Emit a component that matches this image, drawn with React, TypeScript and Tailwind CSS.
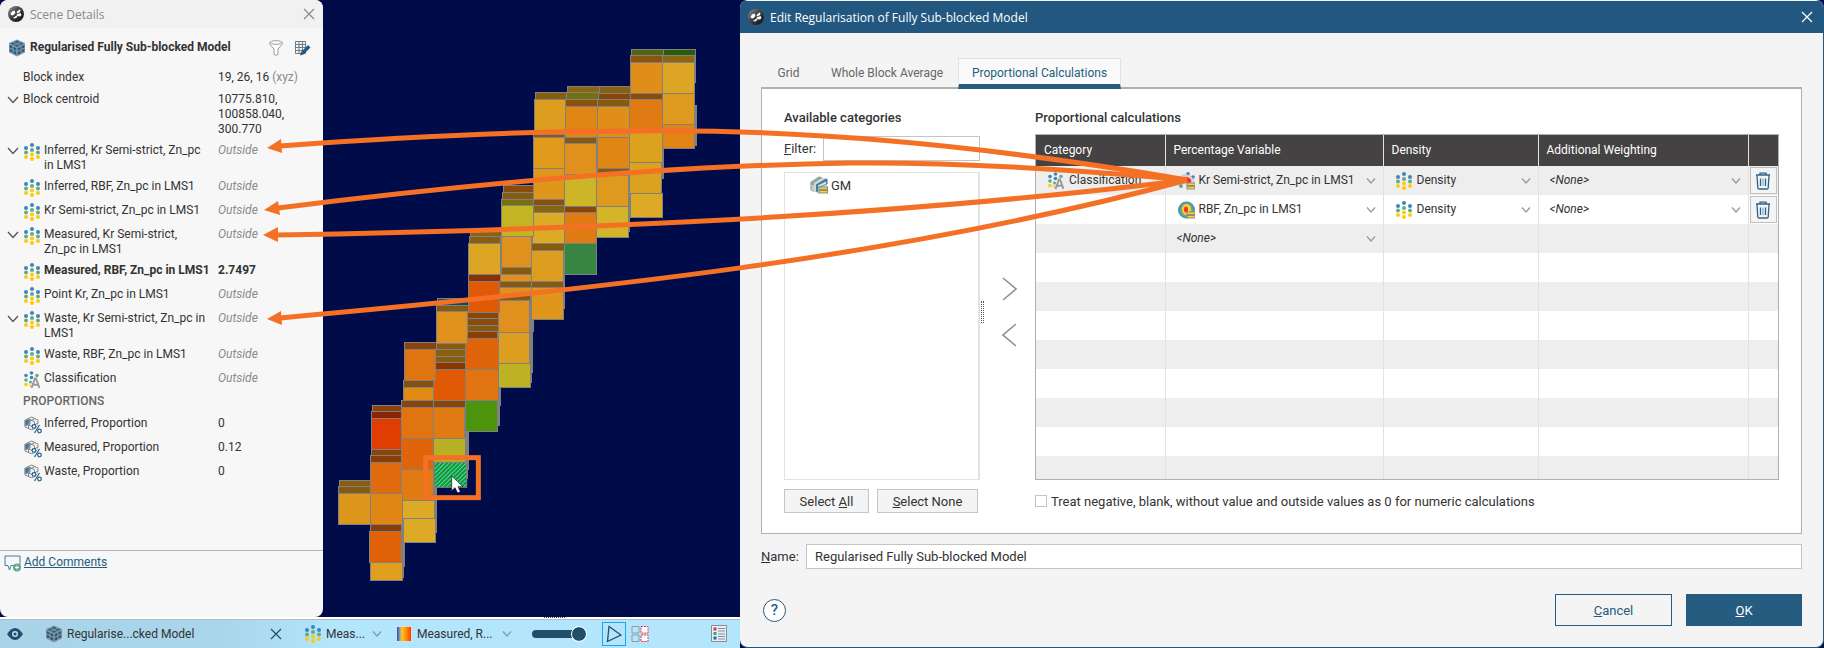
import React, { useState } from 'react';

type Block = [x: number, y: number, w: number, h: number, fill: string];

// Block model slice, in thirds of a pixel
const walls: Block[] = [
    [1092, 58, 5, 100, '#808080'],
    [1094, 226, 6, 122, '#808080'],
    [994, 200, 7, 246, '#808080'],
    [894, 430, 7, 176, '#808080'],
    [798, 335, 5, 100, '#808080'],
    [698, 650, 7, 186, '#808080'],
    [597, 810, 14, 96, '#808080'],
    [597, 906, 11, 122, '#808080'],
    [600, 1010, 6, 48, '#808080'],
    [510, 630, 6, 96, '#808080'],
    [502, 1073, 11, 56, '#808080'],
    [502, 1129, 7, 58, '#808080'],
    [403, 1130, 13, 190, '#808080'],
    [406, 1300, 8, 48, '#808080'],
    [308, 1372, 13, 138, '#808080'],
    [214, 1450, 11, 162, '#808080'],
    [214, 1600, 8, 44, '#808080'],
];

const blocks: Block[] = [
    [905, 58, 95, 19, '#56640f'],
    [1001, 59, 95, 18, '#2b5c08'],
    [902, 77, 96, 20, '#8c5413'],
    [998, 77, 96, 20, '#8a6615'],
    [902, 97, 96, 94, '#e08e1a'],
    [998, 97, 95, 94, '#dca624'],
    [899, 191, 97, 18, '#8a4c0c'],
    [998, 191, 95, 92, '#dd9a1e'],
    [899, 209, 97, 97, '#e07a12'],
    [998, 284, 96, 71, '#e08414'],
    [899, 306, 97, 91, '#dba220'],
    [899, 397, 96, 93, '#dba220'],
    [902, 491, 95, 71, '#dcaa24'],
    [712, 170, 95, 18, '#8a6614'],
    [808, 170, 92, 20, '#866212'],
    [709, 188, 95, 20, '#74700f'],
    [805, 190, 95, 19, '#8a4608'],
    [706, 209, 96, 20, '#8a520e'],
    [802, 209, 96, 20, '#865a10'],
    [706, 230, 96, 92, '#e08614'],
    [802, 230, 96, 92, '#e08e1a'],
    [704, 322, 96, 18, '#865a10'],
    [802, 322, 96, 93, '#e08614'],
    [704, 340, 96, 93, '#e0901c'],
    [802, 415, 96, 21, '#865a10'],
    [704, 433, 96, 95, '#ceb528'],
    [799, 436, 97, 93, '#dd9a1e'],
    [704, 529, 95, 18, '#8a4608'],
    [799, 529, 97, 93, '#d4b428'],
    [704, 547, 96, 93, '#e07a12'],
    [704, 640, 96, 93, '#378540'],
    [615, 188, 93, 21, '#865e10'],
    [613, 209, 93, 104, '#dd9e20'],
    [610, 313, 94, 9, '#865a10'],
    [610, 322, 94, 93, '#e09a1c'],
    [610, 415, 94, 93, '#e0961a'],
    [610, 509, 94, 18, '#8a5010'],
    [607, 527, 97, 20, '#866614'],
    [607, 547, 97, 93, '#dcaa24'],
    [605, 640, 97, 20, '#865a10'],
    [604, 661, 96, 93, '#dd9e20'],
    [604, 754, 96, 18, '#865a10'],
    [604, 772, 96, 96, '#e0961a'],
    [520, 467, 90, 20, '#8a4c0c'],
    [517, 487, 93, 21, '#865a10'],
    [514, 508, 96, 18, '#76700f'],
    [514, 526, 95, 93, '#c4b422'],
    [514, 619, 90, 94, '#e0901c'],
    [514, 713, 90, 21, '#865a10'],
    [511, 734, 93, 20, '#e0901c'],
    [508, 754, 96, 18, '#865a10'],
    [508, 772, 96, 24, '#e0901c'],
    [508, 796, 94, 16, '#865a10'],
    [505, 812, 93, 95, '#e0901c'],
    [505, 907, 93, 93, '#dd9e20'],
    [505, 1000, 97, 73, '#bcb224'],
    [420, 604, 94, 16, '#866412'],
    [418, 620, 94, 20, '#8a5e10'],
    [415, 640, 96, 93, '#dca624'],
    [415, 733, 96, 20, '#8a3004'],
    [415, 753, 93, 94, '#e05a06'],
    [412, 847, 93, 18, '#8a4608'],
    [412, 865, 93, 21, '#8a4c0c'],
    [409, 886, 95, 18, '#865a10'],
    [406, 904, 96, 21, '#8a3e06'],
    [406, 925, 98, 93, '#e0640a'],
    [406, 1018, 98, 93, '#e07410'],
    [406, 1111, 97, 94, '#4c940e'],
    [323, 805, 91, 20, '#16465e'],
    [320, 826, 95, 19, '#865a10'],
    [320, 845, 92, 95, '#e0901c'],
    [317, 940, 90, 18, '#865a10'],
    [316, 958, 90, 21, '#8a5e10'],
    [314, 979, 92, 18, '#8a5c10'],
    [311, 997, 95, 21, '#8a3604'],
    [311, 1018, 95, 93, '#e05a06'],
    [311, 1111, 95, 21, '#8a460a'],
    [311, 1132, 92, 93, '#e07a12'],
    [311, 1225, 95, 72, '#b8b024'],
    [223, 938, 95, 20, '#8a440a'],
    [223, 958, 92, 93, '#e07410'],
    [220, 1051, 91, 21, '#865010'],
    [220, 1072, 91, 39, '#e08a14'],
    [214, 1111, 97, 21, '#8a460a'],
    [214, 1132, 97, 93, '#e07410'],
    [214, 1225, 97, 93, '#e0640a'],
    [214, 1318, 97, 93, '#e07a12'],
    [217, 1411, 96, 55, '#dcaa24'],
    [220, 1466, 97, 71, '#dcaa24'],
    [128, 1125, 87, 19, '#8a440a'],
    [125, 1144, 90, 20, '#8a2402'],
    [125, 1165, 90, 94, '#e03e00'],
    [125, 1258, 90, 18, '#8a460a'],
    [122, 1276, 92, 21, '#8a3e06'],
    [122, 1297, 93, 93, '#e06a0c'],
    [122, 1390, 95, 93, '#e08614'],
    [120, 1483, 95, 20, '#8a3e06'],
    [119, 1503, 96, 94, '#e06208'],
    [122, 1597, 96, 55, '#e09e1e'],
    [29, 1351, 92, 18, '#865e10'],
    [26, 1369, 95, 21, '#865a10'],
    [26, 1390, 95, 93, '#dd961c'],
];

const Logo: React.FC = () => (
    <svg viewBox="0 0 16 16" className="size-4 shrink-0">
        <defs>
            <linearGradient id="logo" x1="0" y1="0" x2="1" y2="1">
                <stop offset="0" stopColor="#97979b" />
                <stop offset="0.4" stopColor="#4a4a4e" />
                <stop offset="0.8" stopColor="#1c1c1f" />
            </linearGradient>
        </defs>
        <circle cx="8" cy="8" r="8" fill="url(#logo)" />
        <path d="M2.500 7.500Q4 4.500 6.500 4.500L7.500 7 5 9.500 3 9zM8.500 6l3-2.500 1 .5-.5 2-2.500 1.500zM8.500 8.500l4-1.500 1 2-1.500 1.500-3-.5zM5 12l3.500-2.500 1 1.500L7 12.500z" fill="#fff" />
    </svg>
);

const CubeIcon: React.FC = () => (
    <svg viewBox="0 0 18 18" className="size-[18px] shrink-0">
        <path d="M9 .5 17 4v9.500L9 17.500 1 13.500V4z" fill="#8d979f" />
        <path d="M9 1.500 12 3 9 4.300 6 3zM5 3.400 8 4.700 5 6 2.300 4.600zM13 3.400l2.700 1.200L13 6l-3-1.300zM9 5.200l3 1.300L9 8 6 6.500z" fill="#2b648c" />
        <path d="M1.700 6 4.500 7.300v2.500L1.700 8.500zM5.500 7.800l2.800 1.400v2.500l-2.800-1.300zM1.700 9.800l2.800 1.300v2.500l-2.800-1.300zM5.500 11.600l2.800 1.300v2.800l-2.800-1.300zM16.300 6v2.500l-2.800 1.300V7.300zM12.500 7.800v2.600l-2.800 1.300V9.200zM16.300 9.800v2.500l-2.800 1.300v-2.500zM12.500 11.600v2.800l-2.800 1.300v-2.800z" fill="#255c82" />
    </svg>
);

const DotsIcon: React.FC = () => (
    <svg viewBox="0 0 16 18" className="h-[18px] w-4 shrink-0">
        <g fill="#3d86b8">
            <circle cx="2" cy="5" r="2" />
            <circle cx="8" cy="2" r="2" />
            <circle cx="14" cy="5" r="2" />
        </g>
        <g fill="#5fab8c">
            <circle cx="2" cy="9.500" r="2" />
            <circle cx="8" cy="7" r="2" />
            <circle cx="14" cy="9.500" r="2" />
        </g>
        <g fill="#ffcb05">
            <circle cx="2" cy="14" r="2" />
            <circle cx="8" cy="11.500" r="2" />
            <circle cx="8" cy="16" r="2" />
            <circle cx="14" cy="14" r="2" />
        </g>
    </svg>
);

const CategoryIcon: React.FC = () => (
    <svg viewBox="0 0 16 18" className="h-[18px] w-4 shrink-0">
        <g fill="#3d86b8">
            <circle cx="2" cy="4.500" r="1.800" />
            <circle cx="7.500" cy="2" r="1.800" />
            <circle cx="7.500" cy="6.500" r="1.800" />
        </g>
        <g fill="#5fab8c">
            <circle cx="2" cy="9" r="1.800" />
            <circle cx="13" cy="4.500" r="1.800" />
            <circle cx="6.500" cy="11" r="1.500" />
        </g>
        <circle cx="2" cy="13.500" r="1.800" fill="#ffcb05" />
        <circle cx="6" cy="14.500" r="1" fill="#ffcb05" />
        <path d="m7.500 17 3.500-9.500h1L15.500 17M8.800 13.800h5.400" fill="none" stroke="#9a9a9a" strokeWidth="2" />
    </svg>
);

const ProportionIcon: React.FC = () => (
    <svg viewBox="0 0 18 18" className="size-[18px] shrink-0">
        <path d="M7.500 1 14 4v6l-6 4-7-3V4z" fill="#eee" stroke="#8a8a8a" />
        <path d="M1 4.500 6 3v5l-5 2zM1 10l5-2" fill="#3a7299" stroke="#7f9db3" />
        <path d="m4 2.700 6.500 3V13M11 2.500 4.500 5.700V12M14 7l-6 3.300L4 9" fill="none" stroke="#8a8a8a" />
        <path d="m16 8-5 9" stroke="#f7f7f7" strokeWidth="3" />
        <circle cx="10" cy="10.500" r="1.800" fill="#fff" stroke="#2b648c" strokeWidth="1.300" />
        <circle cx="15.500" cy="15" r="1.800" fill="#fff" stroke="#2b648c" strokeWidth="1.300" />
        <path d="m15.500 9-5 8" stroke="#2b648c" strokeWidth="1.200" />
    </svg>
);

const RbfIcon: React.FC = () => (
    <svg viewBox="0 0 18 18" className="size-[18px] shrink-0">
        <circle cx="8.500" cy="9" r="8.500" fill="#4a93b8" />
        <ellipse cx="8.500" cy="9" rx="6.500" ry="7" fill="#62ae83" />
        <ellipse cx="8.500" cy="8.500" rx="4.500" ry="5.500" fill="#ffd21f" />
        <ellipse cx="8" cy="8.500" rx="2" ry="3" fill="#e8343c" />
        <path d="M8.500 10.500h8.500v7H8.500z" fill="#8d8d8d" />
        <path d="M9.500 11.500h7V13h-7zM9.500 15h7v1.500h-7z" fill="#ffd21f" />
    </svg>
);

const KrigingIcon: React.FC = () => (
    <svg viewBox="0 0 18 18" className="size-[18px] shrink-0">
        <circle cx="10" cy="1.800" r="1.800" fill="#3d86b8" />
        <circle cx="15" cy="5" r="1.800" fill="#3d86b8" />
        <circle cx="3" cy="14" r="2" fill="#5fab8c" />
        <ellipse cx="9.500" cy="8" rx="7" ry="4.500" fill="#f7c6c4" stroke="#c9c9c9" transform="rotate(30 9.500 8)" />
        <ellipse cx="9.500" cy="8" rx="4" ry="2.500" fill="#e8343c" transform="rotate(30 9.500 8)" />
        <path d="M8.500 10.500h8.500v7H8.500z" fill="#8d8d8d" />
        <path d="M9.500 11.500h7V13h-7zM9.500 15h7v1.500h-7z" fill="#ffd21f" />
    </svg>
);

const GmIcon: React.FC = () => (
    <svg viewBox="0 0 18 18" className="size-[18px] shrink-0">
        <path d="M.5 6 9 .5l8 2.500v13l-9 1.500L.5 14z" fill="#d3d7d7" />
        <path d="M.5 6 9 .5l3.500 1L4 7v9L.5 14z" fill="#86a99c" />
        <path d="M1.500 8.500 4 9.500V15l-2.500-1z" fill="#c9cdcd" />
        <path d="m6 8.500 10-6 1.500.5v5L8 12v4l-2-.5z" fill="#3f7da3" />
        <path d="m8 9.500 8-4v2.500L8 11z" fill="#e4e8e8" />
        <path d="M8.500 10.500H18v7H8.500z" fill="#8d8d8d" />
        <path d="M9.500 11.500h7.500V13H9.500zM9.500 15h7.500v1.500H9.500z" fill="#ffd21f" />
    </svg>
);

const Chevron: React.FC<{ className?: string }> = ({ className = '' }) => (
    <svg viewBox="0 0 12 8" className={`h-2 w-3 shrink-0 ${className}`} fill="none" stroke="currentColor" strokeWidth="1.300">
        <path d="m1 1 5 5.500L11 1" />
    </svg>
);

const SmallChevron: React.FC<{ className?: string }> = ({ className = '' }) => (
    <svg viewBox="0 0 10 6" className={`h-1.5 w-2.5 shrink-0 ${className}`} fill="none" stroke="currentColor" strokeWidth="1.300">
        <path d="m1 .5 4 4.500L9 .5" />
    </svg>
);

const Cross: React.FC<{ className?: string }> = ({ className = '' }) => (
    <svg viewBox="0 0 12 12" className={className} fill="none" stroke="currentColor" strokeWidth="1.200">
        <path d="m1 1 10 10M11 1 1 11" />
    </svg>
);

const TrashIcon: React.FC = () => (
    <svg viewBox="0 0 16 18" className="h-[18px] w-4" fill="none" stroke="#2b648c" strokeWidth="1.300">
        <path d="M1 3h14M5 2.500V1.200h6v1.300M2 3.500l.8 12.500q.1 1 1.200 1h8q1.100 0 1.200-1L14 3.500M5.500 6.500V14M10.500 6.500V14" />
        <path d="M8 6.500V14" stroke="#8fb0c6" />
    </svg>
);

const Scene: React.FC = () => (
    <svg viewBox="-21 -90 1251 1851" preserveAspectRatio="xMinYMin meet" className="h-[617px] w-[417px]">
        <defs>
            <pattern id="hatch" width="9" height="9" patternUnits="userSpaceOnUse" patternTransform="rotate(45)">
                <rect width="9" height="9" fill="#2f8a1c" />
                <rect width="3" height="9" fill="#14f0d8" />
            </pattern>
        </defs>
        <g shapeRendering="crispEdges">
            {walls.map(([x, y, w, h, fill], index) => (
                <rect key={index} x={x} y={y} width={w} height={h} fill={fill} />
            ))}
            {blocks.map(([x, y, w, h, fill], index) => (
                <rect key={index} x={x} y={y} width={w} height={h} fill={fill} stroke="#808080" strokeWidth="3" />
            ))}
        </g>
        <rect x="313" y="1297" width="97" height="75" fill="url(#hatch)" stroke="#808080" strokeWidth="3" />
        <rect x="287" y="1283" width="158" height="120" fill="none" stroke="#f47025" strokeWidth="15" />
        <path d="M365 1338v44l10-9 8 16 8-4-7-15h15z" fill="#fff" stroke="#111" strokeWidth="2" />
    </svg>
);

interface DetailRow {
    name: string;
    value: string;
    icon: 'dots' | 'category' | 'proportion';
    open?: boolean;
    bold?: boolean;
}

const variables: DetailRow[] = [
    { name: 'Inferred, Kr Semi-strict, Zn_pc in LMS1', value: 'Outside', icon: 'dots', open: true },
    { name: 'Inferred, RBF, Zn_pc in LMS1', value: 'Outside', icon: 'dots' },
    { name: 'Kr Semi-strict, Zn_pc in LMS1', value: 'Outside', icon: 'dots' },
    { name: 'Measured, Kr Semi-strict, Zn_pc in LMS1', value: 'Outside', icon: 'dots', open: true },
    { name: 'Measured, RBF, Zn_pc in LMS1', value: '2.7497', icon: 'dots', bold: true },
    { name: 'Point Kr, Zn_pc in LMS1', value: 'Outside', icon: 'dots' },
    { name: 'Waste, Kr Semi-strict, Zn_pc in LMS1', value: 'Outside', icon: 'dots', open: true },
    { name: 'Waste, RBF, Zn_pc in LMS1', value: 'Outside', icon: 'dots' },
    { name: 'Classification', value: 'Outside', icon: 'category' },
];

const proportions: DetailRow[] = [
    { name: 'Inferred, Proportion', value: '0', icon: 'proportion' },
    { name: 'Measured, Proportion', value: '0.12', icon: 'proportion' },
    { name: 'Waste, Proportion', value: '0', icon: 'proportion' },
];

const DetailItem: React.FC<{ row: DetailRow }> = ({ row }) => (
    <div className={`flex min-h-6 py-[3px] ${row.bold ? 'font-bold' : ''}`}>
        <div className="w-6 shrink-0 pt-1 pl-[7px]">{row.open && <Chevron className="text-[#555]" />}</div>
        <div className="-mb-1 w-5 shrink-0">
            {row.icon === 'dots' && <DotsIcon />}
            {row.icon === 'category' && <CategoryIcon />}
            {row.icon === 'proportion' && <ProportionIcon />}
        </div>
        <div className="w-[174px] shrink-0">
            <div className={row.bold ? 'whitespace-nowrap' : 'w-[163px]'}>{row.name}</div>
        </div>
        <div className={row.value === 'Outside' ? 'text-[#8a8a8a] italic' : ''}>{row.value}</div>
    </div>
);

const SceneDetails: React.FC = () => (
    <aside className="flex w-[323px] shrink-0 flex-col overflow-hidden rounded-lg bg-[#f7f7f7] text-[12px] leading-[15px] text-[#333]">
        <header className="flex h-7 items-center gap-1.5 bg-[#f1f1f1] px-2 font-['Open_Sans',sans-serif] text-[12px] text-[#8a8a8a]">
            <Logo />
            <span className="flex-1">Scene Details</span>
            <button aria-label="Close">
                <Cross className="size-3" />
            </button>
        </header>
        <div className="flex h-[39px] items-center gap-1 pr-3 pl-2">
            <CubeIcon />
            <h2 className="flex-1 font-bold whitespace-nowrap">Regularised Fully Sub-blocked Model</h2>
            <button aria-label="Filter">
                <svg viewBox="0 0 14 16" className="mr-2 h-4 w-3.5" fill="#fff" stroke="#999">
                    <path d="M1 2.500v2L5 9v5.500q2 1.500 4 0V9l4-4.500v-2z" />
                    <ellipse cx="7" cy="2.500" rx="6" ry="1.800" />
                </svg>
            </button>
            <button aria-label="Edit table">
                <svg viewBox="0 0 16 16" className="size-4" fill="none">
                    <path d="M.5 1.500h10v12H.5zM.5 4.500h10M.5 7.500h10M.5 10.500h10M4 1.500v12M7.500 1.500v12" stroke="#6b7a85" />
                    <path d="m6 12 7-7 2.500 2.500-7 7L5 15.500z" fill="#225a85" />
                </svg>
            </button>
        </div>
        <div className="flex min-h-[22px] pt-[3px] pl-[23px]">
            <div className="w-[195px] shrink-0">Block index</div>
            <div>
                19, 26, 16 <span className="text-[#8a8a8a]">(xyz)</span>
            </div>
        </div>
        <div className="flex py-[3px]">
            <div className="w-[23px] shrink-0 pt-1 pl-[7px]">
                <Chevron className="text-[#555]" />
            </div>
            <div className="w-[195px] shrink-0">Block centroid</div>
            <div className="w-[70px]">10775.810, 100858.040, 300.770</div>
        </div>
        {variables.map((row) => (
            <DetailItem key={row.name} row={row} />
        ))}
        <h3 className="h-[21px] pt-0.5 pl-[23px] font-medium text-[#666]">PROPORTIONS</h3>
        {proportions.map((row) => (
            <DetailItem key={row.name} row={row} />
        ))}
        <footer className="mt-auto flex h-[67px] items-start gap-[3px] border-t border-[#b5b5b5] px-1 pt-1">
            <svg viewBox="0 0 17 17" className="size-[17px]" fill="none">
                <path d="M1 1h15v9.500H7L5.500 15 4 10.500H1z" stroke="#3f7da3" />
                <circle cx="13" cy="12.500" r="4" fill="#5fab8c" />
                <path d="M13 10.500v4M11 12.500h4" stroke="#fff" />
            </svg>
            <a href="#comments" className="text-[#265c80] underline">
                Add Comments
            </a>
        </footer>
    </aside>
);

const Toolbar: React.FC = () => (
    <div className="relative flex h-[31px] items-center border-t-2 border-white bg-[#b3e5fc] bg-linear-to-r from-[#a9d4e8] via-[#a9d6eb] via-30% to-[#b3e5fc] to-45% text-[12px] text-[#333] shadow-[inset_0_1px_0_#b5bcc0]">
        <span className="absolute -top-0.5 left-[544px] h-0.5 w-[21px] border-t border-dotted border-[#444]" />
        <button aria-label="Toggle visibility" className="ml-[7px]">
            <svg viewBox="0 0 16 12" className="h-3 w-4">
                <path d="M0 6q8-12 16 0-8 12-16 0z" fill="#234e6b" />
                <circle cx="8" cy="6" r="3" fill="#b3e5fc" />
                <circle cx="8" cy="6" r="1.600" fill="#234e6b" />
            </svg>
        </button>
        <div className="ml-[22px] flex w-[221px] items-center gap-1">
            <CubeIcon />
            Regularise...cked Model
        </div>
        <button aria-label="Remove" className="mr-[23px] ml-1 text-[#234e6b]">
            <Cross className="size-3" />
        </button>
        <button className="flex w-[77px] items-center gap-[5px]">
            <DotsIcon />
            <span className="flex-1 text-left whitespace-nowrap">Meas...</span>
            <SmallChevron className="text-[#8a9aa5]" />
        </button>
        <button className="ml-[14px] flex w-[116px] items-center gap-[5px]">
            <span className="size-4 border border-[#ddd] bg-linear-to-r from-[#1b3fd0] via-[#ffc61a] via-35% to-[#f23a00]" />
            <span className="flex-1 text-left whitespace-nowrap">Measured, R...</span>
            <SmallChevron className="text-[#8a9aa5]" />
        </button>
        <input
            type="range"
            aria-label="Opacity"
            defaultValue={100}
            className="ml-5 h-2 w-[54px] appearance-none rounded-full bg-[#234e6b] [&::-webkit-slider-thumb]:size-3.5 [&::-webkit-slider-thumb]:appearance-none [&::-webkit-slider-thumb]:rounded-full [&::-webkit-slider-thumb]:bg-[#234e6b] [&::-webkit-slider-thumb]:outline [&::-webkit-slider-thumb]:outline-white"
        />
        <button aria-label="Slice" className="ml-4 flex size-6 items-center justify-center border border-[#1aa7ee]">
            <svg viewBox="0 0 16 18" className="h-[18px] w-4" fill="none" stroke="#234e6b" strokeWidth="1.300">
                <path d="M3 1.500 15 10 1.500 16.500z" />
            </svg>
        </button>
        <button aria-label="Cells" className="ml-[5px]">
            <svg viewBox="0 0 18 18" className="size-[18px]" fill="none" stroke="#999">
                <path d="M1 1.500h7v6.500H1zM1 10h7v6.500H1z" />
                <path d="M10 1.500h7v6.500h-7zM10 10h7v6.500h-7z" fill="#fff" stroke="#e8343c" strokeDasharray="2 1" />
            </svg>
        </button>
        <button aria-label="Legend" className="mr-[13px] ml-auto">
            <svg viewBox="0 0 16 17" className="h-[17px] w-4">
                <path d="M.5.500h15v16H.5z" fill="#dff0f8" stroke="#8d8d8d" />
                <path d="M7 3.500h7M7 6h7M7 9h7M7 11.500h7M7 14h7" stroke="#8d8d8d" />
                <path d="M2.500 2.500h3v3h-3z" fill="#e8343c" />
                <path d="M2.500 7h3v3h-3z" fill="#3f9f78" />
                <path d="M2.500 11.500h3v3h-3z" fill="#2b648c" />
            </svg>
        </button>
    </div>
);

const CellSelect: React.FC<{ label: string; value: string; icon?: React.ReactNode }> = ({ label, value, icon }) => (
    <div className="relative flex h-full items-center">
        <span className={`pointer-events-none ${icon ? 'w-[33px] pl-3' : 'w-[11px]'}`}>{icon}</span>
        <select aria-label={label} className={`h-full min-w-0 flex-1 appearance-none bg-transparent ${icon ? '' : 'italic'}`}>
            <option>{value}</option>
        </select>
        <SmallChevron className="pointer-events-none absolute right-[7px] text-[#999]" />
    </div>
);

const rows = [
    { category: 'Classification', variable: 'Kr Semi-strict, Zn_pc in LMS1', icon: <KrigingIcon />, density: 'Density', weighting: '<None>' },
    { category: '', variable: 'RBF, Zn_pc in LMS1', icon: <RbfIcon />, density: 'Density', weighting: '<None>' },
    { category: '', variable: '<None>' },
    ...Array.from({ length: 8 }, () => ({ category: '', variable: '' })),
] as { category: string; variable: string; icon?: React.ReactNode; density?: string; weighting?: string }[];

const ProportionalTable: React.FC = () => (
    <table className="w-full table-fixed border-collapse text-[12px]">
        <colgroup>
            <col className="w-[129px]" />
            <col className="w-[218px]" />
            <col className="w-[155px]" />
            <col />
            <col className="w-[30px]" />
        </colgroup>
        <thead>
            <tr className="h-[31px] bg-[#444243] text-left text-white">
                <th className="border-r border-[#e2e2e2] pl-2 font-normal">Category</th>
                <th className="border-r border-[#e2e2e2] pl-2 font-normal">Percentage Variable</th>
                <th className="border-r border-[#e2e2e2] pl-2 font-normal">Density</th>
                <th className="border-r border-[#e2e2e2] pl-2 font-normal">Additional Weighting</th>
                <th aria-label="Actions" />
            </tr>
        </thead>
        <tbody>
            {rows.map((row, index) => (
                <tr key={index} className="h-[29px] odd:bg-[#eeeeee]">
                    <td className="border-r border-[#e2e2e2] p-0">
                        {row.category && (
                            <div className="flex items-center gap-[5px] pl-3">
                                <CategoryIcon />
                                {row.category}
                            </div>
                        )}
                    </td>
                    <td className="h-[29px] border-r border-[#e2e2e2] p-0">
                        {row.variable && <CellSelect label="Percentage variable" value={row.variable} icon={row.icon} />}
                    </td>
                    <td className="h-[29px] border-r border-[#e2e2e2] p-0">
                        {row.density && <CellSelect label="Density" value={row.density} icon={<DotsIcon />} />}
                    </td>
                    <td className="h-[29px] border-r border-[#e2e2e2] p-0">
                        {row.weighting && <CellSelect label="Additional weighting" value={row.weighting} />}
                    </td>
                    <td className="p-0">
                        {row.density && (
                            <button aria-label="Delete row" className="mx-auto flex h-[27px] w-[27px] items-center justify-center border border-[#bfbfbf] bg-[#f4f4f4]">
                                <TrashIcon />
                            </button>
                        )}
                    </td>
                </tr>
            ))}
        </tbody>
    </table>
);

const tabs = [
    { title: 'Grid', width: 'w-[55px]' },
    { title: 'Whole Block Average', width: 'w-[142px]' },
    { title: 'Proportional Calculations', width: 'w-[163px]' },
];

const EditDialog: React.FC = () => {
    const [activeTab, setActiveTab] = useState<string>('Proportional Calculations');
    const [name, setName] = useState<string>('Regularised Fully Sub-blocked Model');

    return (
        <section className="flex min-w-0 flex-1 flex-col overflow-hidden rounded-lg border-r border-b border-[#22587f] bg-[#f4f4f4] text-[13px] leading-[15px] text-[#333]">
            <header className="mt-px flex h-8 shrink-0 items-center gap-1.5 bg-[#22587f] px-2 font-['Open_Sans',sans-serif] text-[12px] text-white">
                <Logo />
                <span className="flex-1">Edit Regularisation of Fully Sub-blocked Model</span>
                <button aria-label="Close">
                    <Cross className="mr-0.5 size-3" />
                </button>
            </header>

            <div className="flex min-h-0 flex-1 flex-col pr-[21px] pl-[21px]">
                <div className="relative z-10 -mb-0.5 flex pt-[25px] text-[12px]">
                    {tabs.map((tab) => (
                        <button
                            key={tab.title}
                            onClick={() => setActiveTab(tab.title)}
                            className={`h-[31px] whitespace-nowrap ${tab.width} ${
                                activeTab === tab.title
                                    ? 'border border-b-[5px] border-[#e2e2e2] border-b-[#265c80] bg-[#fafafa] pt-1 text-[#265c80]'
                                    : 'text-[#666]'
                            }`}
                        >
                            {tab.title}
                        </button>
                    ))}
                </div>

                <div className="flex min-h-0 flex-1 border border-t-2 border-[#b0b0b0] bg-white pr-[22px] pb-5 pl-[22px]">
                    <div className="flex w-[196px] shrink-0 flex-col">
                        <h3 className="pt-[21px] font-medium">Available categories</h3>
                        <div className="mt-[11px] flex h-[25px] items-center">
                            <label htmlFor="filter" className="w-[39px]">
                                <u>F</u>ilter:
                            </label>
                            <input id="filter" type="text" className="h-[25px] min-w-0 flex-1 border border-[#c4c4c4] bg-white px-2" />
                        </div>
                        <ul className="mt-[11px] flex-1 border border-r-2 border-[#e2e2e2] py-[3px] pl-[25px]">
                            <li className="flex items-center gap-[3px]">
                                <GmIcon />
                                GM
                            </li>
                        </ul>
                        <div className="mt-[9px] flex gap-2">
                            <button className="h-6 w-[85px] border border-[#c4c4c4] bg-[#f4f4f4]">
                                Select <u>A</u>ll
                            </button>
                            <button className="h-6 w-[101px] border border-[#c4c4c4] bg-[#f4f4f4]">
                                <u>S</u>elect None
                            </button>
                        </div>
                    </div>

                    <div className="flex w-[55px] shrink-0 items-center pt-[21px] pl-px">
                        <div className="h-[22px] w-[3px] border-x border-dotted border-[#555]" />
                        <div className="ml-[18px] flex flex-col gap-[22px] text-[#8d8d8d]">
                            <button aria-label="Add">
                                <svg viewBox="0 0 15 24" className="h-6 w-[15px]" fill="none" stroke="currentColor" strokeWidth="1.500">
                                    <path d="m1 1 13 11L1 23" />
                                </svg>
                            </button>
                            <button aria-label="Remove">
                                <svg viewBox="0 0 15 24" className="h-6 w-[15px]" fill="none" stroke="currentColor" strokeWidth="1.500">
                                    <path d="M14 1 1 12l13 11" />
                                </svg>
                            </button>
                        </div>
                    </div>

                    <div className="flex min-w-0 flex-1 flex-col">
                        <h3 className="pt-[21px] font-medium">Proportional calculations</h3>
                        <div className="mt-[9px] min-h-0 flex-1 overflow-hidden border border-[#b0b0b0]">
                            <ProportionalTable />
                        </div>
                        <label className="mt-[9px] flex h-6 items-center gap-1">
                            <input type="checkbox" className="size-3 appearance-none border border-[#c4c4c4] bg-white checked:bg-[#265c80]" />
                            Treat negative, blank, without value and outside values as 0 for numeric calculations
                        </label>
                    </div>
                </div>

                <div className="mt-2.5 flex h-[25px] shrink-0 items-center">
                    <label htmlFor="name" className="w-[45px]">
                        <u>N</u>ame:
                    </label>
                    <input
                        id="name"
                        type="text"
                        value={name}
                        onChange={(e) => setName(e.target.value)}
                        className="h-[25px] min-w-0 flex-1 border border-[#c4c4c4] bg-white px-2"
                    />
                </div>

                <div className="mt-[25px] mb-[21px] flex h-8 shrink-0 items-center">
                    <button aria-label="Help" className="ml-0.5 size-[23px] rounded-full border border-[#265c80] bg-white text-[15px] font-medium text-[#265c80]">
                        ?
                    </button>
                    <button className="mr-3.5 ml-auto h-8 w-[117px] border border-[#265c80] text-[#265c80]">
                        <u>C</u>ancel
                    </button>
                    <button className="h-8 w-[116px] bg-[#265c80] text-white">
                        <u>O</u>K
                    </button>
                </div>
            </div>
        </section>
    );
};

// Arrows run from the percentage variable back to the matching detail rows
const Arrows: React.FC = () => (
    <svg className="pointer-events-none absolute inset-0 z-20 h-[648px] w-[1824px]">
        <g fill="none" stroke="#f47025" strokeWidth="5">
            <path d="M280 146C400 137 520 131 640 131C810 129 990 146 1187 180" />
            <path d="M278 208C430 189 640 166 850 163C960 162 1080 170 1187 180" />
            <path d="M276 235C500 231 850 222 1187 180" />
            <path d="M280 318C580 291 900 258 1187 180" />
        </g>
        <g fill="#f47025">
            <path d="m267 148 14-9 1 14zM264 210l14-9 2 14zM263 235l15-8v15zM267 319l14-8 1 14z" />
        </g>
    </svg>
);

const App: React.FC = () => (
    <main className="relative flex h-screen w-full overflow-hidden bg-[#000c4a] font-[Roboto,sans-serif]">
        <div className="flex w-[740px] shrink-0 flex-col">
            <div className="flex min-h-0 flex-1">
                <SceneDetails />
                <Scene />
            </div>
            <Toolbar />
        </div>
        <EditDialog />
        <Arrows />
    </main>
);

export default App;
